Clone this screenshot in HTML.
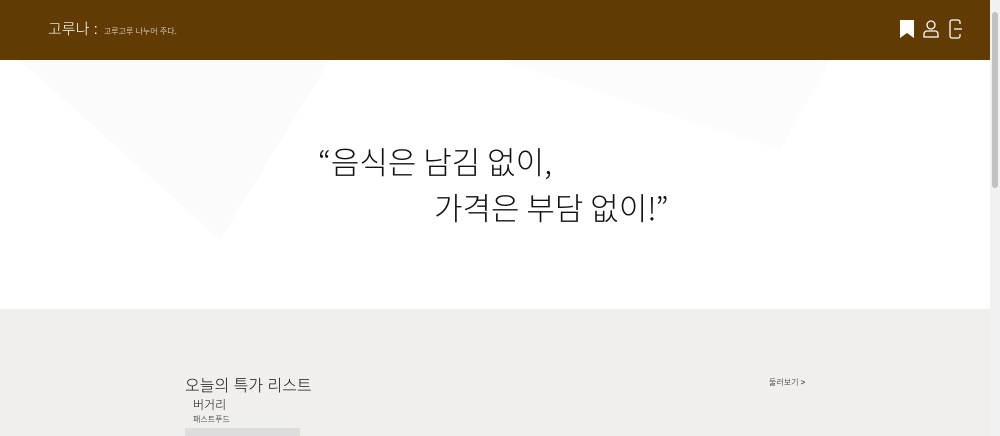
<!DOCTYPE html>
<html><head><meta charset="utf-8"><style>
*{margin:0;padding:0;box-sizing:border-box}
body{width:1000px;height:436px;overflow:hidden;background:#f0efeb;font-family:"Liberation Sans","Noto Sans CJK KR",sans-serif;position:relative}
.hdr{position:absolute;left:0;top:0;width:990px;height:60px;background:#613b02;color:#fff}
.logo{position:absolute;left:48px;top:18px;font-size:15px;font-weight:300}
.logo small{font-size:8px;margin-left:2px}
.hero{position:absolute;left:0;top:60px;width:990px;height:249px;background:#fff;overflow:hidden}
.q{position:absolute;font-size:31px;color:#111;white-space:nowrap;font-weight:300;font-family:"Noto Sans CJK KR",sans-serif}
.sb{position:absolute;right:0;top:0;width:10px;height:436px;background:#f1f1f1}
.sb div{position:absolute;left:2px;top:12px;width:6px;height:176px;background:#c1c1c1;border-radius:3px}
.t{position:absolute;color:#111;white-space:nowrap;font-weight:300}
</style></head><body>
<div class="hdr">
<div class="logo">고루나 : <small>고루고루 나누어 주다.</small></div>
<svg style="position:absolute;left:899px;top:19px" width="66" height="20" viewBox="0 0 66 20">
<path d="M1 1h14v18l-7-5-7 5z" fill="#fff"/>
<circle cx="32" cy="6" r="4" fill="none" stroke="#fff" stroke-width="1.3"/>
<path d="M25 18v-3a3 3 0 0 1 3-3h8a3 3 0 0 1 3 3v3z" fill="none" stroke="#fff" stroke-width="1.3"/>
<path d="M61 5v-2a2 2 0 0 0-2-2h-6a2 2 0 0 0-2 2v14a2 2 0 0 0 2 2h6a2 2 0 0 0 2-2v-2" fill="none" stroke="#fff" stroke-width="1.3"/>
<path d="M55 10h8" stroke="#fff" stroke-width="1.3"/>
</svg>
</div>
<div class="hero">
<svg width="990" height="249" style="position:absolute;left:0;top:0">
<polygon points="20,0 330,0 220,180" fill="#fbfbfb"/>
<polygon points="500,0 830,0 780,90" fill="#fcfcfc"/>
</svg>
<div class="q" style="left:318px;top:78px">“음식은 남김 없이,</div>
<div class="q" style="left:434px;top:124px">가격은 부담 없이!”</div>
</div>
<div class="t" style="left:185px;top:372px;font-size:16px">오늘의 특가 리스트</div>
<div class="t" style="left:769px;top:377px;font-size:8px">둘러보기 &gt;</div>
<div class="t" style="left:193px;top:396px;font-size:12px">버거리</div>
<div class="t" style="left:193px;top:414px;font-size:8px">패스트푸드</div>
<div style="position:absolute;left:185px;top:428px;width:115px;height:8px;background:#ddd"></div>
<div class="sb"><div></div></div>
</body></html>
